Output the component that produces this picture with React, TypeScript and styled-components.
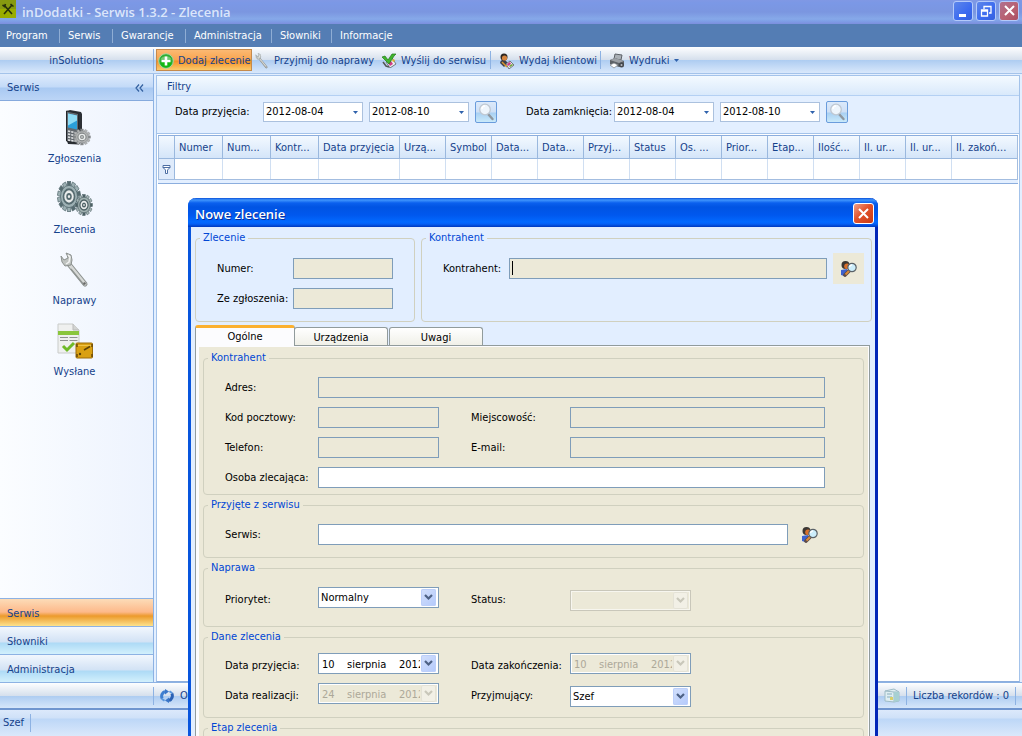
import React, { useId } from "react";
import styled, { createGlobalStyle, css } from "styled-components";

const GlobalStyle = createGlobalStyle`
  *, *::before, *::after { box-sizing: border-box; }
  body { margin: 0; background: #fff; }
  svg { flex: none; display: block; }
  button, input, select { font: inherit; color: inherit; margin: 0; }
  body, button, input, select {
    font-family: Tahoma, "DejaVu Sans Condensed", "Noto Sans", sans-serif;
    font-size: 11px;
    line-height: 14px;
  }
`;

const ink = "#15428b";
const beige = "#ece9d8";
const fieldLine = "#7f9db9";

/* ---------- window frame ---------- */

const Screen = styled.div`
  position: relative;
  display: flex;
  flex-direction: column;
  height: 100vh;
  overflow: hidden;
  color: ${ink};
  background: #e3efff;
`;

const TitleBar = styled.header`
  display: flex;
  align-items: center;
  flex: none;
  height: 24px;
  padding: 0 3px 0 0;
  background: linear-gradient(#8098e4 0, #7b98e6 3px, #7b96e0 12px, #86a9e9 19px, #7f9fe6 21px, #7c8ede 24px);
`;

const AppIcon = styled.span`
  display: flex;
  width: 16px;
  height: 18px;
  margin: 0 6px 6px 0;
`;

const AppTitle = styled.h1`
  flex: 1;
  margin: 0;
  font: 600 13px/18px "Trebuchet MS", "Open Sans", "Noto Sans", sans-serif;
  color: #dbe6fb;
`;

const CaptionButtons = styled.div`
  display: flex;
  gap: 3px;
  padding-bottom: 3px;
`;

const CaptionButton = styled.button<{ $tone: "blue" | "faded" | "red" }>`
  display: flex;
  align-items: center;
  justify-content: center;
  width: ${(p) => (p.$tone === "red" ? 21 : 20)}px;
  height: ${(p) => (p.$tone === "red" ? 21 : 20)}px;
  padding: 0;
  border: 1px solid ${(p) => (p.$tone === "red" ? "#fff" : "#b4cafa")};
  border-radius: 3px;
  background: ${(p) =>
    p.$tone === "blue"
      ? "linear-gradient(135deg, #5d86ea, #3c6bf0 60%, #3560dd)"
      : p.$tone === "faded"
      ? "linear-gradient(135deg, #b0708f, #b96070 60%, #a94f63)"
      : "linear-gradient(135deg, #f0a088, #e2532c 45%, #c93a12)"};
`;

const MenuBar = styled.nav`
  display: flex;
  align-items: center;
  flex: none;
  height: 23px;
  background: #547db4;
`;

const MenuItem = styled.button<{ $width: number }>`
  width: ${(p) => p.$width}px;
  height: 14px;
  padding: 0 0 0 8px;
  border: 0;
  border-right: 1px solid #8fadd4;
  background: none;
  color: #fff;
  text-align: left;
  white-space: nowrap;
  &:first-child { padding-left: 6px; }
  &:last-child { border-right: 0; }
`;

const barFill = css`
  background: linear-gradient(#fdfeff 0, #d5dfec 13px, #adccf1 13px, #d9e8fb 26px);
`;

const ToolBar = styled.div`
  display: flex;
  flex: none;
  height: 27px;
  padding: 2px 0;
  border-bottom: 1px solid #a4c3ea;
  ${barFill}
`;

const Brand = styled.div`
  flex: none;
  width: 154px;
  border-right: 1px solid #8db2e3;
  margin-right: 2px;
  line-height: 24px;
  text-align: center;
`;

const ToolButton = styled.button<{ $width: number; $hot?: boolean }>`
  display: flex;
  align-items: center;
  gap: 4px;
  width: ${(p) => p.$width}px;
  height: 22px;
  padding: 1px 1px 0;
  border: 1px solid ${(p) => (p.$hot ? "#c58a4c" : "transparent")};
  background: ${(p) =>
    p.$hot ? "linear-gradient(#fbb973 0, #f9a44f 10px, #f58f24 11px, #fbd174 21px)" : "none"};
  white-space: nowrap;
`;

const BarDivider = styled.span`
  flex: none;
  width: 1px;
  height: 18px;
  margin: 2px 6px;
  background: #8db2e3;
`;

/* ---------- workspace ---------- */

const Workspace = styled.div`
  display: flex;
  flex: 1;
  min-height: 0;
`;

const Sidebar = styled.aside`
  display: flex;
  flex-direction: column;
  flex: none;
  width: 154px;
  border-right: 1px solid #8db2e3;
  background: linear-gradient(90deg, #fbfdff, #edf3fe);
`;

const SidebarHead = styled.div`
  display: flex;
  align-items: center;
  justify-content: space-between;
  height: 27px;
  padding: 1px 9px 0 7px;
  border-bottom: 1px solid #86aadd;
  background: linear-gradient(#dfebfc 0, #c3daf8 13px, #a9c9f2 14px, #bcd5f6 26px);
`;

const IconButton = styled.button`
  display: flex;
  padding: 0;
  border: 0;
  background: none;
`;

const ModuleList = styled.div`
  display: flex;
  flex-direction: column;
  flex: 1;
  padding: 9px 4px 0 0;
`;

const ModuleButton = styled.button`
  display: flex;
  flex-direction: column;
  align-items: center;
  gap: 6px;
  height: 71px;
  padding: 0;
  border: 0;
  background: none;
`;

const Band = styled.button<{ $active?: boolean }>`
  height: 28px;
  padding: 2px 7px 0;
  border: 0;
  border-top: 1px solid #8db2e3;
  text-align: left;
  background: ${(p) =>
    p.$active
      ? "linear-gradient(#fcdcb8 0, #fdb98a 13px, #ec9a2c 17px, #fde28c 27px)"
      : "linear-gradient(#f2f7fd 0, #d2e2f5 15px, #addaf6 16px, #d2f0fc 27px)"};
`;

const Main = styled.main`
  display: flex;
  flex-direction: column;
  flex: 1;
  min-width: 0;
  margin: 1px 2px 0 2px;
  border: 1px solid #a4c3ea;
  border-bottom-color: #8caede;
  background: #fff;
`;

const FilterPanel = styled.section`
  height: 58px;
  border-bottom: 1px solid #a4c3ea;
  background: #e3efff;
`;

const PanelTitle = styled.h2`
  height: 20px;
  margin: 0;
  padding: 1px 10px 0;
  border-bottom: 1px solid #b4d0f3;
  background: linear-gradient(#f4faff, #d9e9fb);
  font-size: 11px;
  font-weight: 400;
  line-height: 19px;
`;

const FilterRow = styled.div`
  display: flex;
  align-items: center;
  gap: 6px;
  padding: 5px 18px;
  color: #000;
`;

const FilterLabel = styled.label<{ $width: number }>`
  flex: none;
  width: ${(p) => p.$width}px;
  white-space: nowrap;
`;

const FilterBox = styled.span`
  display: flex;
  width: 100px;
  height: 20px;
  border: 1px solid #abc1de;
  background: #fff;
`;

const BareInput = styled.input`
  flex: 1;
  min-width: 0;
  padding: 0 2px;
  border: 0;
  outline: 0;
  background: none;
`;

const DropButton = styled.button`
  display: flex;
  align-items: center;
  justify-content: center;
  width: 14px;
  padding: 0;
  border: 0;
  background: none;
`;

const SearchButton = styled.button`
  display: flex;
  align-items: center;
  justify-content: center;
  width: 22px;
  height: 22px;
  margin-right: 23px;
  padding: 0;
  border: 1px solid #6a9cdc;
  border-radius: 2px;
  background: linear-gradient(#dbe9fa 0, #cfe0f6 10px, #a9d0f2 11px, #cdecfb 21px);
`;

const GridFrame = styled.div`
  flex: none;
  margin: 1px 1px 0;
  border-top: 1px solid #8caede;
  border-bottom: 1px solid #8caede;
  padding-bottom: 3px;
  background: #e3efff;
`;

const Grid = styled.table`
  width: 100%;
  table-layout: fixed;
  border-collapse: separate;
  border-spacing: 0;
  border: 1px solid #a3bde0;
  border-top: 0;
`;

const HeadCell = styled.th<{ $width?: number }>`
  ${(p) => (p.$width ? `width: ${p.$width}px;` : "")}
  height: 23px;
  padding: 2px 0 0 4px;
  overflow: hidden;
  border-right: 1px solid #9ab8de;
  border-bottom: 1px solid #9ab8de;
  background: linear-gradient(#f3f9ff, #d4e5f9);
  font-weight: 400;
  text-align: left;
  white-space: nowrap;
  &:last-child { border-right: 0; }
`;

const FilterCell = styled.td<{ $mark?: boolean }>`
  height: 20px;
  padding: ${(p) => (p.$mark ? "0 0 0 3px" : "0")};
  border-right: 1px solid ${(p) => (p.$mark ? "#9ab8de" : "#d0dff2")};
  background: ${(p) => (p.$mark ? "#dfebfb" : "#fff")};
  &:last-child { border-right: 0; }
`;

/* ---------- footer ---------- */

const RecordBar = styled.div`
  display: flex;
  align-items: center;
  flex: none;
  height: 28px;
  border-top: 1px solid #8db2e3;
  border-bottom: 2px solid #6f95cf;
  ${barFill}
`;

const Spacer = styled.span<{ $width?: number }>`
  flex: ${(p) => (p.$width ? `0 0 ${p.$width}px` : "1")};
`;

const FooterButton = styled.button`
  display: flex;
  align-items: center;
  gap: 6px;
  padding: 0;
  border: 0;
  background: none;
`;

const StatusBar = styled.footer`
  display: flex;
  align-items: center;
  flex: none;
  height: 26px;
  padding-left: 3px;
  background: linear-gradient(#dce9fb 0, #cfe1f8 8px, #bdd7f7 9px, #dae8fb 26px);
`;

/* ---------- dialog ---------- */

const Dialog = styled.section`
  position: absolute;
  left: 188px;
  top: 198px;
  width: 690px;
  display: flex;
  flex-direction: column;
  border: solid #0855dd;
  border-width: 0 3px;
  border-right-color: #0226b8;
  border-radius: 8px 8px 0 0;
  background: #e2eeff;
  color: #000;
`;

const DialogHead = styled.header`
  display: flex;
  align-items: center;
  justify-content: space-between;
  height: 29px;
  margin: 0 -3px;
  padding: 2px 4px 0 7px;
  border-radius: 8px 8px 0 0;
  background: linear-gradient(#0a50d8 0, #3f95fd 2px, #0a60ee 5px, #0054e3 9px, #0058ee 17px, #0269ff 24px, #0560f5 26px, #0038bd 29px);
`;

const DialogTitle = styled.h2`
  margin: 0;
  font: 600 13px/18px "Trebuchet MS", "Open Sans", "Noto Sans", sans-serif;
  color: #fff;
  text-shadow: 1px 1px 0 #0a2f9a;
`;

const DialogBody = styled.div`
  padding: 4px 3px 0 4px;
`;

const TopGroups = styled.div`
  display: flex;
  gap: 6px;
`;

const Group = styled.fieldset<{ $height: number; $width?: number }>`
  flex: ${(p) => (p.$width ? `0 0 ${p.$width}px` : "1 1 auto")};
  min-width: 0;
  height: ${(p) => p.$height}px;
  margin: 0;
  padding: 0 4px;
  border: 1px solid #d0d0bf;
  border-radius: 4px;
`;

const Legend = styled.legend`
  padding: 0 3px;
  color: #0046d5;
`;

const Fields = styled.div<{ $columns: string; $top: number; $right?: number; $tall?: boolean }>`
  display: grid;
  grid-template-columns: ${(p) => p.$columns};
  grid-auto-rows: ${(p) => (p.$tall ? 24 : 21)}px;
  row-gap: ${(p) => (p.$tall ? 6 : 9)}px;
  align-items: center;
  padding: ${(p) => p.$top}px ${(p) => p.$right ?? 0}px 0 17px;
`;

const FieldLabel = styled.label<{ $indent?: boolean }>`
  padding-top: 1px;
  padding-left: ${(p) => (p.$indent ? 32 : 0)}px;
  white-space: nowrap;
`;

const TextField = styled.input<{ $wide?: boolean; $caret?: boolean }>`
  ${(p) => (p.$wide ? "grid-column: 2 / -1;" : "")}
  width: 100%;
  min-width: 0;
  height: 21px;
  padding: 0 2px;
  border: 1px solid ${fieldLine};
  border-radius: 0;
  outline: 0;
  background-color: #fff;
  &:read-only { background-color: ${beige}; }
  ${(p) =>
    p.$caret &&
    css`
      caret-color: transparent;
      background-image: linear-gradient(#000, #000);
      background-position: 2px 2px;
      background-size: 1px 14px;
      background-repeat: no-repeat;
    `}
`;

const FinderButton = styled.button`
  display: flex;
  align-items: center;
  justify-content: center;
  width: 31px;
  height: 31px;
  margin: 0 0 0 6px;
  padding: 0;
  border: 0;
  background: ${beige};
`;

const Tabs = styled.div`
  display: flex;
  align-items: flex-end;
  height: 24px;
  margin-bottom: -1px;
`;

const Tab = styled.button<{ $active?: boolean }>`
  position: relative;
  width: ${(p) => (p.$active ? 100 : 94)}px;
  height: ${(p) => (p.$active ? 21 : 18)}px;
  margin: ${(p) => (p.$active ? "0 -1px 0 0" : "0 1px 1px 0")};
  padding: ${(p) => (p.$active ? 0 : 2)}px 0 0;
  border: 1px solid #919b9c;
  border-top: ${(p) => (p.$active ? "3px solid #fbb030" : "1px solid #919b9c")};
  border-bottom: 0;
  border-radius: 3px 3px 0 0;
  background: ${(p) => (p.$active ? "#fcfcfe" : "linear-gradient(#fff, #f0f0e8)")};
`;

const TabPage = styled.div`
  margin-right: 2px;
  padding: 4px 4px 0;
  border: 1px solid #919b9c;
  border-bottom: 0;
  background: ${beige};
  box-shadow: inset 3px 0 0 #fcfcfe, inset -1px 1px 0 #fcfcfe;
`;

const GroupStack = styled.div`
  display: flex;
  flex-direction: column;
  gap: 3px;
  padding: 1px 1px 0 3px;
`;

const SelectShell = styled.span<{ $disabled?: boolean; $low?: boolean }>`
  display: grid;
  grid-template-columns: 1fr 17px;
  align-items: center;
  align-self: ${(p) => (p.$low ? "end" : "start")};
  width: 121px;
  height: 21px;
  border: 1px solid ${(p) => (p.$disabled ? "#c9c7ba" : fieldLine)};
  background: ${(p) => (p.$disabled ? beige : "#fff")};
  box-shadow: ${(p) => (p.$disabled ? "inset 0 0 0 1px #f7f6ef" : "none")};
`;

const NativeSelect = styled.select`
  grid-area: 1 / 1 / 2 / 3;
  width: 100%;
  height: 19px;
  padding: 1px 18px 0 2px;
  border: 0;
  outline: 0;
  appearance: none;
  background: none;
`;

const ArrowBox = styled.span<{ $disabled?: boolean }>`
  grid-area: 1 / 2 / 2 / 3;
  display: flex;
  align-items: center;
  justify-content: center;
  width: 15px;
  height: 17px;
  border-radius: 2px;
  background: ${(p) =>
    p.$disabled ? "#f2f0e6" : "linear-gradient(135deg, #d3e0fc, #b3c9fb)"};
  box-shadow: ${(p) => (p.$disabled ? "inset 0 0 0 1px #e4e2d6" : "inset 0 0 0 1px #bccffa")};
  pointer-events: none;
`;

const DateShell = styled.span<{ $disabled?: boolean }>`
  display: flex;
  align-items: center;
  align-self: start;
  width: 121px;
  height: 21px;
  padding: 1px 2px 1px 1px;
  border: 1px solid ${fieldLine};
  background: ${(p) => (p.$disabled ? beige : "#fff")};
  box-shadow: ${(p) => (p.$disabled ? "inset 0 0 0 1px #fff" : "none")};
  color: ${(p) => (p.$disabled ? "#aca899" : "#000")};
`;

const DatePart = styled.input<{ $width: number }>`
  width: ${(p) => p.$width}px;
  height: 17px;
  padding: 1px 0 0 2px;
  border: 0;
  outline: 0;
  background: none;
  color: inherit;
`;

const DateArrow = styled.button`
  display: flex;
  padding: 0;
  margin-left: auto;
  border: 0;
  background: none;
`;

/* ---------- glyphs ---------- */

const ToolsGlyph = () => (
  <svg width="16" height="18" viewBox="0 0 16 18">
    <rect width="16" height="18" fill="#9aad00" />
    <path d="M0 0h16v9H0z" fill="#869a10" />
    <path d="M4 5l8 9M12 5l-8 9" stroke="#26300a" strokeWidth="1.600" />
    <path d="M2.500 5l2 1.500 1-2.500M10.500 4l3 2.500" stroke="#26300a" strokeWidth="1.600" fill="none" />
  </svg>
);

const CloseGlyph = () => (
  <svg width="13" height="13" viewBox="0 0 13 13">
    <path d="M2 2l9 9M11 2l-9 9" stroke="#fff" strokeWidth="2" />
  </svg>
);

const Caret = () => (
  <svg width="5" height="3" viewBox="0 0 5 3">
    <path d="M0 0h5L2.500 3z" fill="#2f62ac" />
  </svg>
);

const Chevron = ({ color = "#4d6185" }: { color?: string }) => (
  <svg width="9" height="7" viewBox="0 0 9 7">
    <path d="M1 1l3.500 3.500L8 1" fill="none" stroke={color} strokeWidth="2.200" />
  </svg>
);

const PlusGlyph = () => (
  <svg width="16" height="16" viewBox="0 0 16 16">
    <circle cx="8" cy="8" r="7.300" fill="#2fae33" stroke="#a9d6a4" />
    <path d="M2.500 6.500a6 5.500 0 0 1 11 0z" fill="#72c972" />
    <path d="M2.500 9a5.500 5.500 0 0 0 11 0z" fill="#12b812" />
    <path d="M8 3.500v9M3.500 8h9" stroke="#fff" strokeWidth="2.600" />
  </svg>
);

const WrenchGlyph = ({ size }: { size: number }) => (
  <svg width={size} height={size} viewBox="0 0 36 36">
    <path d="M11 11l17 21" stroke="#8a8f8d" strokeWidth="5" strokeLinecap="round" />
    <path d="M11 11l17 21" stroke="#d6d8d6" strokeWidth="3" strokeLinecap="round" />
    <path d="M14 17l13 16" stroke="#8f9492" strokeWidth="1.200" />
    <path d="M9 1l5 2 1 5-1 5-6 1-3-4-1-6 3 4 4-2-1-3z" fill="#bfc3c0" stroke="#8c918f" />
    <path d="M11 3l2 2-1 5-3 2" fill="none" stroke="#f2f3f2" strokeWidth="1.500" />
    <circle cx="27.500" cy="31.500" r="1.200" fill="#666" />
  </svg>
);

const SendGlyph = () => (
  <svg width="15" height="15" viewBox="0 0 15 15">
    <path d="M4 9l6-4 4 6-6 4z" fill="#e9eef0" stroke="#6d7b80" />
    <path d="M6 10l3-2 2 3-3 2z" fill="#d23c86" />
    <path d="M10 7l2-1 1 2-2 1z" fill="#e0b02c" />
    <path d="M0 4l3-1 3 4 4-6 4 0-2 2-5 8z" fill="#3fb52c" stroke="#247a1a" strokeWidth=".7" />
    <path d="M1 9l3 4 3 1" stroke="#555" strokeWidth="1.500" fill="none" />
  </svg>
);

const ClientGlyph = () => (
  <svg width="16" height="16" viewBox="0 0 16 16">
    <path d="M1 10q1-4 5-3l3 3-4 4z" fill="#3b3f4c" />
    <circle cx="5" cy="4" r="3.500" fill="#2d2620" />
    <circle cx="5.500" cy="5" r="2.600" fill="#d5853f" />
    <path d="M7 11l4-3 4 4-5 4z" fill="#e9e9ee" stroke="#72767e" />
    <path d="M8 11l3-2 1 2-3 2z" fill="#cc3a83" />
    <path d="M10 13l3-2 1 1-3 2z" fill="#68a42c" />
    <path d="M3 9l5 5" stroke="#d9962d" strokeWidth="1.500" />
  </svg>
);

const PrinterGlyph = () => (
  <svg width="16" height="16" viewBox="0 0 16 16">
    <path d="M6 1l7 1-1 5-7-1z" fill="#aab0b6" stroke="#5d6268" />
    <path d="M1 7l5-2 9 3v4l-5 2-9-3z" fill="#5d6268" />
    <path d="M1 7l5-2 9 3-5 2z" fill="#9ba0a6" />
    <path d="M1 12l4-2 4 2-4 3z" fill="#fff" stroke="#7a7f85" strokeWidth=".7" />
    <circle cx="12.500" cy="12" r="2.500" fill="#44484d" />
    <circle cx="12.500" cy="12" r="1" fill="#b8bcc2" />
  </svg>
);

const CollapseGlyph = () => (
  <svg width="9" height="8" viewBox="0 0 9 8">
    <path d="M4 .5L1 4l3 3.500M8 .5L5 4l3 3.500" fill="none" stroke="#33609f" strokeWidth="1.200" />
  </svg>
);

type GearProps = { cx: number; cy: number; rx: number; ry: number; teeth: number; fill: string; dark: string };
const Gear = ({ cx, cy, rx, ry, teeth, fill, dark }: GearProps) => (
  <g transform={`translate(${cx} ${cy}) scale(${rx / 10} ${ry / 10})`}>
    {Array.from({ length: teeth }, (_, i) => (
      <rect
        key={i}
        x="-1.500"
        y="-10"
        width="3"
        height="5"
        fill={i % 3 ? fill : dark}
        stroke={dark}
        strokeWidth=".5"
        transform={`rotate(${(360 / teeth) * i})`}
      />
    ))}
    <circle r="7.400" fill={fill} stroke={dark} strokeWidth=".6" />
    <circle r="4.800" fill="#e9eceb" stroke={dark} strokeWidth="1.400" />
    <circle r="2.400" fill={dark} />
    <circle r="1" fill="#e9eceb" />
  </g>
);

const PhoneGlyph = () => (
  <svg width="36" height="36" viewBox="0 0 36 36">
    <path d="M10 1l3-1L24 2l1 2v27l-3 3.500L11 34l-1-3z" fill="#2c3035" />
    <path d="M9.500 1l12 2.500v30L9.500 31z" fill="#62686e" stroke="#24272b" />
    <path d="M11 3.500l9 2v14l-9-2z" fill="#2a9fd9" />
    <path d="M11 3.500l9 2v5l-9 5z" fill="#8fdcf5" />
    <path d="M11 21l9 2M11 24l9 2M11 27l9 2M11 30l9 1.500" stroke="#e3e5e6" strokeWidth="1.600" strokeDasharray="2.300 1" />
    <Gear cx={25} cy={27} rx={8.5} ry={8} teeth={12} fill="#b4b6b6" dark="#85898a" />
  </svg>
);

const GearsGlyph = () => (
  <svg width="36" height="36" viewBox="0 0 36 36">
    <Gear cx={12} cy={15.5} rx={11.5} ry={15} teeth={14} fill="#9db0b3" dark="#566b70" />
    <Gear cx={27} cy={24} rx={8.5} ry={10.5} teeth={12} fill="#a3b3b2" dark="#4c6064" />
  </svg>
);

const SentGlyph = () => (
  <svg width="36" height="36" viewBox="0 0 36 36">
    <path d="M1 1h15l6 6v23H1z" fill="#eff0ef" stroke="#c9cbc9" />
    <path d="M16 1v6h6" fill="#d2d4d2" stroke="#bbb" />
    <path d="M1 8h21v4H1z" fill="#8ac63c" />
    <path d="M3 14.500h18M3 17.500h18" stroke="#8f9291" strokeWidth="1.200" strokeDasharray="8 1.500" />
    <path d="M6 23l4 4 7-7" fill="none" stroke="#6fba28" strokeWidth="3" />
    <rect x="19" y="20" width="16.500" height="15" rx="1" fill="#d9a012" stroke="#9c6c08" />
    <path d="M20 22.500h15" stroke="#efc348" />
    <path d="M27 27l6-3.500" stroke="#5d4206" strokeWidth="1.500" />
    <circle cx="23" cy="31" r="1.200" fill="#5d4206" />
    <path d="M20 21v3M35 21v3M20 31v3M35 31v3" stroke="#6c4a06" strokeWidth="1.500" />
  </svg>
);

const LensGlyph = () => (
  <svg width="18" height="18" viewBox="0 0 18 18">
    <path d="M11 11l4.500 5" stroke="#8f979f" strokeWidth="2.400" strokeLinecap="round" />
    <circle cx="8" cy="6.500" r="5.300" fill="#eef5fc" stroke="#bfc8d2" strokeWidth="1.300" />
    <path d="M5 6a3 3 0 0 1 3-3" fill="none" stroke="#fff" strokeWidth="1.500" />
  </svg>
);

const FinderGlyph = () => (
  <svg width="16" height="16" viewBox="0 0 16 16">
    <path d="M0 9l6-1 1 4-4 3-3-1z" fill="#3d62cf" />
    <path d="M4 14l5-5" stroke="#5d4d4b" strokeWidth="3.800" strokeLinecap="round" />
    <path d="M4.500 13.500l5-5" stroke="#e08a35" strokeWidth="1.800" />
    <circle cx="4.500" cy="4" r="4" fill="#3b3734" />
    <circle cx="6" cy="5.300" r="2.800" fill="#d9702a" />
    <circle cx="11" cy="6.500" r="4.200" fill="#cdeefb" stroke="#5b6268" strokeWidth="1.200" />
    <path d="M8.500 6a2.500 2.500 0 0 1 2.500-2" fill="none" stroke="#fff" strokeWidth="1.400" />
  </svg>
);

const RefreshGlyph = () => (
  <svg width="14" height="14" viewBox="0 0 14 14">
    <path d="M2.200 9.500A5 5 0 0 1 5 2.500" fill="none" stroke="#3f7fd0" strokeWidth="3" />
    <path d="M11.800 4.500A5 5 0 0 1 9 11.500" fill="none" stroke="#2c62b4" strokeWidth="3" />
    <path d="M5 0l4 2.500-4 3zM9 14l-4-2.500 4-3z" fill="#3a76c8" />
    <path d="M9.500 2.200l2.800 2M4.500 11.800l-2.800-2" stroke="#5a97de" strokeWidth="2" />
  </svg>
);

const BoxGlyph = () => (
  <svg width="16" height="15" viewBox="0 0 16 15">
    <path d="M1 3l9-2 5 3v9l-5 1-9-1z" fill="#dfeef2" stroke="#9fbcc6" />
    <path d="M1 3l9 1 5 0M10 4v10" fill="none" stroke="#9fbcc6" />
    <path d="M10 4l5 0v9l-5 1z" fill="#a7d0d2" />
    <path d="M3 6h5M3 9h5" stroke="#88aebd" />
    <path d="M6 9h3v3H6z" fill="#d9d06c" />
  </svg>
);

const FunnelGlyph = () => (
  <svg width="9" height="9" viewBox="0 0 9 9">
    <path d="M1 .5h7v2L5.500 5v3.500h-2V5L1 2.500z" fill="#fff" stroke="#4d6ea3" />
    <path d="M1 2.500h7" stroke="#4d6ea3" />
  </svg>
);

/* ---------- composed controls ---------- */

const FilterDate = ({ id, value, label }: { id: string; value: string; label: string }) => (
  <FilterBox>
    <BareInput id={id} aria-label={label} defaultValue={value} />
    <DropButton aria-label={`${label}: rozwiń`}>
      <Caret />
    </DropButton>
  </FilterBox>
);

type ComboProps = { label: string; value: string; indent?: boolean; disabled?: boolean; low?: boolean };
const ComboField = ({ label, value, indent, disabled, low }: ComboProps) => {
  const id = useId();
  return (
    <>
      <FieldLabel htmlFor={id} $indent={indent}>{label}</FieldLabel>
      <SelectShell $disabled={disabled} $low={low}>
        <NativeSelect id={id} disabled={disabled} defaultValue={value}>
          <option>{value}</option>
        </NativeSelect>
        <ArrowBox $disabled={disabled}>
          <Chevron color={disabled ? "#c9c7ba" : undefined} />
        </ArrowBox>
      </SelectShell>
    </>
  );
};

type InputFieldProps = { label: string; indent?: boolean; wide?: boolean; readOnly?: boolean; focused?: boolean };
const InputField = ({ label, indent, wide, readOnly, focused }: InputFieldProps) => {
  const id = useId();
  return (
    <>
      <FieldLabel htmlFor={id} $indent={indent}>{label}</FieldLabel>
      <TextField id={id} $wide={wide} $caret={focused} readOnly={readOnly} autoFocus={focused} />
    </>
  );
};

type DateFieldProps = { label: string; day: string; indent?: boolean; disabled?: boolean };
const DateField = ({ label, day, indent, disabled }: DateFieldProps) => {
  const id = useId();
  return (
    <>
      <FieldLabel htmlFor={id} $indent={indent}>{label}</FieldLabel>
      <DateShell $disabled={disabled}>
        <DatePart id={id} $width={25} disabled={disabled} defaultValue={day} />
        <DatePart aria-label="Miesiąc" $width={52} disabled={disabled} defaultValue="sierpnia" />
        <DatePart aria-label="Rok" $width={23} disabled={disabled} defaultValue="2012" />
        <DateArrow aria-label="Kalendarz" disabled={disabled}>
          <ArrowBox $disabled={disabled}>
            <Chevron color={disabled ? "#c9c7ba" : undefined} />
          </ArrowBox>
        </DateArrow>
      </DateShell>
    </>
  );
};

const menu: [string, number][] = [
  ["Program", 60],
  ["Serwis", 53],
  ["Gwarancje", 73],
  ["Administracja", 86],
  ["Słowniki", 60],
  ["Informacje", 70],
];

const columns: [string, number?][] = [
  ["Numer", 48],
  ["Num...", 48],
  ["Kontr...", 48],
  ["Data przyjęcia", 81],
  ["Urzą...", 46],
  ["Symbol", 46],
  ["Data...", 46],
  ["Data...", 46],
  ["Przyj...", 46],
  ["Status", 46],
  ["Os. ...", 46],
  ["Prior...", 46],
  ["Etap...", 46],
  ["Ilość...", 46],
  ["Il. ur...", 46],
  ["Il. ur...", 46],
  ["Il. zakoń..."],
];

const modules = [
  { name: "Zgłoszenia", icon: <PhoneGlyph /> },
  { name: "Zlecenia", icon: <GearsGlyph /> },
  { name: "Naprawy", icon: <WrenchGlyph size={36} /> },
  { name: "Wysłane", icon: <SentGlyph /> },
];

const pairColumns = "93px 121px 131px 1fr";

const OrderDialog = () => (
  <Dialog role="dialog" aria-label="Nowe zlecenie">
    <DialogHead>
      <DialogTitle>Nowe zlecenie</DialogTitle>
      <CaptionButton $tone="red" aria-label="Zamknij">
        <CloseGlyph />
      </CaptionButton>
    </DialogHead>
    <DialogBody>
      <TopGroups>
        <Group $height={91} $width={220}>
          <Legend>Zlecenie</Legend>
          <Fields $columns="76px 100px" $top={13}>
            <InputField label="Numer:" readOnly />
            <InputField label="Ze zgłoszenia:" readOnly />
          </Fields>
        </Group>
        <Group $height={91}>
          <Legend>Kontrahent</Legend>
          <Fields $columns="66px 1fr auto" $top={13} $right={3}>
            <InputField label="Kontrahent:" readOnly focused />
            <FinderButton aria-label="Szukaj kontrahenta">
              <FinderGlyph />
            </FinderButton>
          </Fields>
        </Group>
      </TopGroups>
      <Tabs role="tablist">
        <Tab role="tab" aria-selected $active>Ogólne</Tab>
        <Tab role="tab">Urządzenia</Tab>
        <Tab role="tab">Uwagi</Tab>
      </Tabs>
      <TabPage role="tabpanel">
        <GroupStack>
          <Group $height={144}>
            <Legend>Kontrahent</Legend>
            <Fields $columns={pairColumns} $top={12} $right={34}>
              <InputField label="Adres:" wide readOnly />
              <InputField label="Kod pocztowy:" readOnly />
              <InputField label="Miejscowość:" indent readOnly />
              <InputField label="Telefon:" readOnly />
              <InputField label="E-mail:" indent readOnly />
              <InputField label="Osoba zlecająca:" wide />
            </Fields>
          </Group>
          <Group $height={60}>
            <Legend>Przyjęte z serwisu</Legend>
            <Fields $columns="93px 1fr auto" $top={12} $right={34}>
              <InputField label="Serwis:" />
              <FinderButton aria-label="Szukaj serwisu">
                <FinderGlyph />
              </FinderButton>
            </Fields>
          </Group>
          <Group $height={66}>
            <Legend>Naprawa</Legend>
            <Fields $columns={pairColumns} $top={12} $right={34} $tall>
              <ComboField label="Priorytet:" value="Normalny" />
              <ComboField label="Status:" value="" indent disabled low />
            </Fields>
          </Group>
          <Group $height={88}>
            <Legend>Dane zlecenia</Legend>
            <Fields $columns={pairColumns} $top={9} $right={34} $tall>
              <DateField label="Data przyjęcia:" day="10" />
              <DateField label="Data zakończenia:" day="10" indent disabled />
              <DateField label="Data realizacji:" day="24" disabled />
              <ComboField label="Przyjmujący:" value="Szef" indent low />
            </Fields>
          </Group>
          <Group $height={60}>
            <Legend>Etap zlecenia</Legend>
          </Group>
        </GroupStack>
      </TabPage>
    </DialogBody>
  </Dialog>
);

export default function App() {
  return (
    <>
      <GlobalStyle />
      <Screen>
        <TitleBar>
          <AppIcon><ToolsGlyph /></AppIcon>
          <AppTitle>inDodatki - Serwis 1.3.2 - Zlecenia</AppTitle>
          <CaptionButtons>
            <CaptionButton $tone="blue" aria-label="Minimalizuj">
              <svg width="12" height="12" viewBox="0 0 12 12">
                <path d="M2 9h7v3H2z" fill="#fff" />
              </svg>
            </CaptionButton>
            <CaptionButton $tone="blue" aria-label="Przywróć">
              <svg width="12" height="12" viewBox="0 0 12 12">
                <path d="M4 4V1.500h7V8H9M1.500 5h6v6h-6zM1.500 6h6" fill="none" stroke="#fff" strokeWidth="1.300" />
              </svg>
            </CaptionButton>
            <CaptionButton $tone="faded" aria-label="Zamknij program">
              <CloseGlyph />
            </CaptionButton>
          </CaptionButtons>
        </TitleBar>

        <MenuBar>
          {menu.map(([name, width]) => (
            <MenuItem key={name} $width={width}>{name}</MenuItem>
          ))}
        </MenuBar>

        <ToolBar>
          <Brand>inSolutions</Brand>
          <ToolButton $width={96} $hot><PlusGlyph />Dodaj zlecenie</ToolButton>
          <ToolButton $width={128}><WrenchGlyph size={16} />Przyjmij do naprawy</ToolButton>
          <ToolButton $width={104}><SendGlyph />Wyślij do serwisu</ToolButton>
          <BarDivider />
          <ToolButton $width={97}><ClientGlyph />Wydaj klientowi</ToolButton>
          <BarDivider />
          <ToolButton $width={75}><PrinterGlyph />Wydruki<Caret /></ToolButton>
        </ToolBar>

        <Workspace>
          <Sidebar>
            <SidebarHead>
              Serwis
              <IconButton aria-label="Zwiń panel"><CollapseGlyph /></IconButton>
            </SidebarHead>
            <ModuleList>
              {modules.map((m) => (
                <ModuleButton key={m.name}>{m.icon}{m.name}</ModuleButton>
              ))}
            </ModuleList>
            <Band $active>Serwis</Band>
            <Band>Słowniki</Band>
            <Band>Administracja</Band>
          </Sidebar>

          <Main>
            <FilterPanel>
              <PanelTitle>Filtry</PanelTitle>
              <FilterRow>
                <FilterLabel htmlFor="received-from" $width={82}>Data przyjęcia:</FilterLabel>
                <FilterDate id="received-from" label="Data przyjęcia od" value="2012-08-04" />
                <FilterDate id="received-to" label="Data przyjęcia do" value="2012-08-10" />
                <SearchButton aria-label="Filtruj datę przyjęcia"><LensGlyph /></SearchButton>
                <FilterLabel htmlFor="closed-from" $width={82}>Data zamknięcia:</FilterLabel>
                <FilterDate id="closed-from" label="Data zamknięcia od" value="2012-08-04" />
                <FilterDate id="closed-to" label="Data zamknięcia do" value="2012-08-10" />
                <SearchButton aria-label="Filtruj datę zamknięcia"><LensGlyph /></SearchButton>
              </FilterRow>
            </FilterPanel>
            <GridFrame>
              <Grid>
                <thead>
                  <tr>
                    <HeadCell $width={16} />
                    {columns.map(([name, width], i) => (
                      <HeadCell key={i} $width={width}>{name}</HeadCell>
                    ))}
                  </tr>
                </thead>
                <tbody>
                  <tr>
                    <FilterCell $mark><FunnelGlyph /></FilterCell>
                    {columns.map((_, i) => (
                      <FilterCell key={i} />
                    ))}
                  </tr>
                </tbody>
              </Grid>
            </GridFrame>
          </Main>
        </Workspace>

        <RecordBar>
          <Spacer $width={147} />
          <BarDivider />
          <FooterButton><RefreshGlyph />Odśwież</FooterButton>
          <Spacer />
          <FooterButton aria-label="Eksport"><Caret /><BoxGlyph /></FooterButton>
          <BarDivider />
          <span>Liczba rekordów : 0</span>
          <BarDivider />
        </RecordBar>
        <StatusBar>
          Szef
          <BarDivider />
        </StatusBar>

        <OrderDialog />
      </Screen>
    </>
  );
}
